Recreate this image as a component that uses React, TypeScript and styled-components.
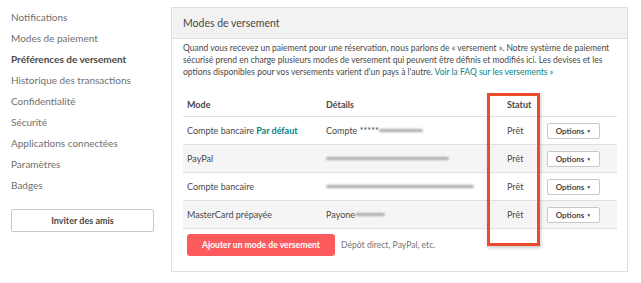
import React from "react";
import styled, { createGlobalStyle } from "styled-components";

const GlobalStyle = createGlobalStyle`
  body {
    margin: 0;
    background: #ffffff;
    font-family: "Lato", "Noto Sans", sans-serif;
    color: #484848;
  }
`;

type Row = {
  mode: string;
  isDefault?: boolean;
  prefix?: string;
  blur: number;
  shade?: boolean;
};

const rows: Row[] = [
  { mode: "Compte bancaire", isDefault: true, prefix: "Compte *****", blur: 44 },
  { mode: "PayPal", blur: 123, shade: true },
  { mode: "Compte bancaire", blur: 148 },
  { mode: "MasterCard prépayée", prefix: "Payone", blur: 30, shade: true },
];

const navItems = [
  "Notifications",
  "Modes de paiement",
  "Préférences de versement",
  "Historique des transactions",
  "Confidentialité",
  "Sécurité",
  "Applications connectées",
  "Paramètres",
  "Badges",
];

const App = () => {
  return (
    <Page>
      <GlobalStyle />
      <Sidebar>
        {navItems.map((item) => (
          <NavItem key={item} active={item === "Préférences de versement"}>
            {item}
          </NavItem>
        ))}
        <InviteButton>Inviter des amis</InviteButton>
      </Sidebar>

      <Panel>
        <PanelHeader>Modes de versement</PanelHeader>
        <PanelBody>
          <Intro>
            <IntroLine>
              Quand vous recevez un paiement pour une réservation, nous parlons de « versement ». Notre système de paiement
            </IntroLine>
            <IntroLine>
              sécurisé prend en charge plusieurs modes de versement qui peuvent être définis et modifiés ici. Les devises et les
            </IntroLine>
            <IntroLine>
              options disponibles pour vos versements varient d'un pays à l'autre.{" "}
              <Link>Voir la FAQ sur les versements »</Link>
            </IntroLine>
          </Intro>

          <Table>
            <HeadRow>
              <ModeCell>Mode</ModeCell>
              <DetailCell>Détails</DetailCell>
              <StatusCell>Statut</StatusCell>
              <ActionCell />
            </HeadRow>
            {rows.map((row, i) => (
              <BodyRow key={i} shade={row.shade}>
                <ModeCell>
                  {row.mode}
                  {row.isDefault && <Link strong> Par défaut</Link>}
                </ModeCell>
                <DetailCell>
                  {row.prefix}
                  <Blurred style={{ width: row.blur }} />
                </DetailCell>
                <StatusCell>Prêt</StatusCell>
                <ActionCell>
                  <OptionsButton>
                    Options <Caret>▼</Caret>
                  </OptionsButton>
                </ActionCell>
              </BodyRow>
            ))}
          </Table>

          <Footer>
            <AddButton>Ajouter un mode de versement</AddButton>
            <Hint>Dépôt direct, PayPal, etc.</Hint>
          </Footer>
        </PanelBody>
      </Panel>

      <Highlight />
    </Page>
  );
};

export default App;

const Page = styled.div`
  position: relative;
  display: flex;
  width: 641px;
  height: 283px;
  overflow: hidden;
`;

const Sidebar = styled.nav`
  width: 160px;
  padding: 7px 0 0 11px;
  display: flex;
  flex-direction: column;
`;

const NavItem = styled.div<{ active?: boolean }>`
  height: 21px;
  line-height: 21px;
  font-size: 10px;
  white-space: nowrap;
  color: ${({ active }) => (active ? "#484848" : "#6f6f6f")};
  font-weight: ${({ active }) => (active ? 700 : 400)};
`;

const InviteButton = styled.button`
  margin-top: 13px;
  width: 143px;
  height: 23px;
  border: 1px solid #c8c8c8;
  border-radius: 2px;
  background: #ffffff;
  font-family: inherit;
  font-size: 9px;
  font-weight: 700;
  color: #484848;
  padding: 0;
`;

const Panel = styled.section`
  margin-top: 7px;
  width: 457px;
  height: 265px;
  border: 1px solid #dce0e0;
  box-sizing: border-box;
`;

const PanelHeader = styled.div`
  height: 30px;
  line-height: 30px;
  padding-left: 11px;
  background: #f2f2f2;
  border-bottom: 1px solid #dce0e0;
  font-size: 10.5px;
  color: #484848;
`;

const PanelBody = styled.div`
  padding: 3px 11px 0 11px;
`;

const Intro = styled.div`
  font-size: 8.5px;
  line-height: 12px;
  color: #484848;
`;

const IntroLine = styled.div`
  white-space: nowrap;
`;

const Link = styled.span<{ strong?: boolean }>`
  color: #008489;
  font-weight: ${({ strong }) => (strong ? 700 : 400)};
`;

const Table = styled.div`
  margin-top: 14px;
  width: 434px;
  display: flex;
  flex-direction: column;
`;

const HeadRow = styled.div`
  display: grid;
  grid-template-columns: 139px 182px 43px 1fr;
  height: 24px;
  align-items: center;
  border-bottom: 1px solid #dce0e0;
  font-size: 9px;
  font-weight: 700;
`;

const BodyRow = styled.div<{ shade?: boolean }>`
  display: grid;
  grid-template-columns: 139px 182px 43px 1fr;
  height: 27px;
  align-items: center;
  border-bottom: 1px solid #dce0e0;
  background: ${({ shade }) => (shade ? "#f5f5f5" : "#ffffff")};
  font-size: 9px;
`;

const ModeCell = styled.div`
  padding-left: 4px;
  white-space: nowrap;
`;

const DetailCell = styled.div`
  display: flex;
  align-items: center;
  padding-left: 4px;
  white-space: nowrap;
`;

const StatusCell = styled.div`
  padding-left: 3px;
`;

const ActionCell = styled.div``;

const Blurred = styled.span`
  display: inline-block;
  height: 3px;
  background: #a9a9a9;
  border-radius: 2px;
  filter: blur(1.2px);
`;

const OptionsButton = styled.button`
  width: 53px;
  height: 16px;
  padding: 0;
  border: 1px solid #c8c8c8;
  border-radius: 2px;
  background: #ffffff;
  font-family: inherit;
  font-size: 8px;
  font-weight: 700;
  color: #484848;
`;

const Caret = styled.span`
  font-size: 5px;
  vertical-align: 1px;
`;

const Footer = styled.div`
  display: flex;
  align-items: center;
  gap: 6px;
  margin-top: 5px;
  padding-left: 4px;
`;

const AddButton = styled.button`
  width: 148px;
  height: 22px;
  padding: 0;
  border: none;
  border-radius: 3px;
  background: #fc5b5e;
  color: #ffffff;
  font-family: inherit;
  font-size: 8.6px;
  font-weight: 700;
`;

const Hint = styled.span`
  font-size: 8.6px;
  color: #767676;
`;

const Highlight = styled.div`
  position: absolute;
  left: 487px;
  top: 93px;
  width: 53px;
  height: 153px;
  box-sizing: border-box;
  border: 3px solid #ec4b2b;
  box-shadow: 1px 2px 3px rgba(0, 0, 0, 0.2);
  pointer-events: none;
`;
